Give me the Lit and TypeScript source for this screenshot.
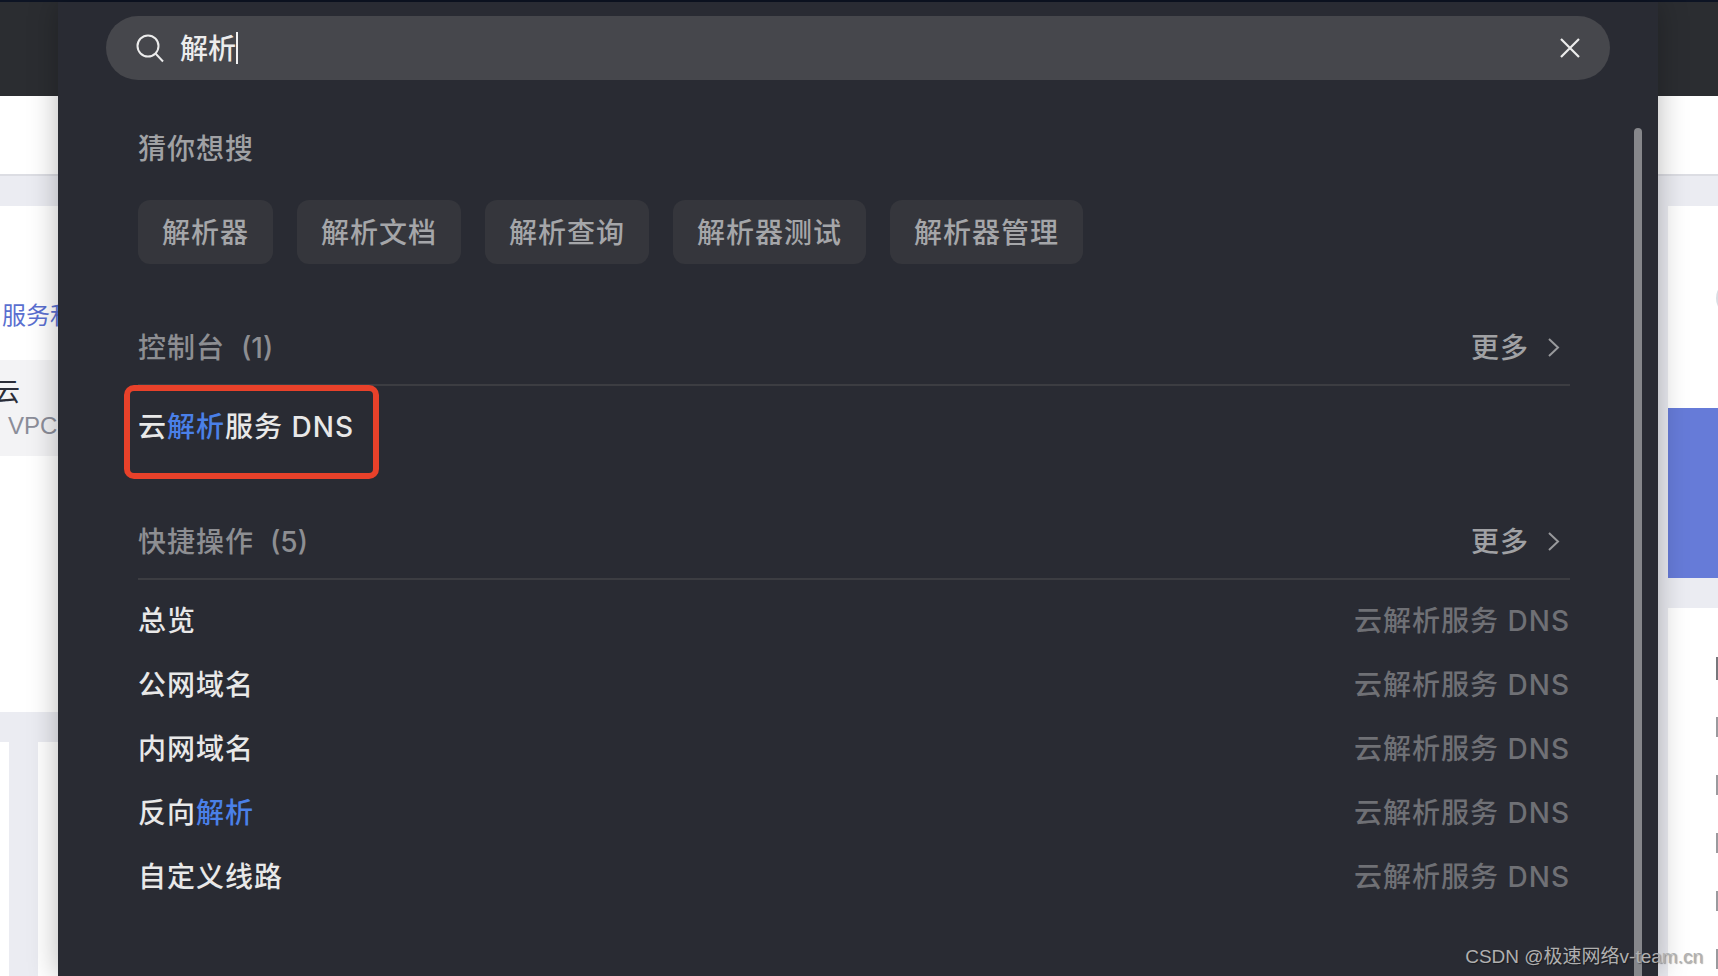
import { LitElement, html, css, svg } from "lit";
import { customElement } from "lit/decorators.js";

const SUGGESTIONS = ["解析器", "解析文档", "解析查询", "解析器测试", "解析器管理"];

const QUICK_ACTIONS: { label: string; hit?: string }[] = [
  { label: "总览" },
  { label: "公网域名" },
  { label: "内网域名" },
  { label: "反向", hit: "解析" },
  { label: "自定义线路" },
];

const chevron = svg`<path d="M2 2l9 8.5L2 19" fill="none" stroke="currentColor" stroke-width="2"/>`;

@customElement("app-root")
export class AppRoot extends LitElement {
  static styles = css`
    :host {
      display: block;
      width: 1718px;
      height: 976px;
      overflow: hidden;
      position: relative;
      background: #fff;
      font-family: "Liberation Sans", "Noto Sans CJK SC", sans-serif;
    }

    .topline {
      height: 2px;
      background: #0d1424;
    }

    .stage {
      display: grid;
      grid-template-columns: 58px 1600px 60px;
      height: 974px;
    }

    /* page behind the dialog */
    .side {
      display: flex;
      flex-direction: column;
      min-width: 0;
      overflow: hidden;
    }
    .bar {
      height: 94px;
      flex: none;
      background: #2b2d31;
    }
    .white {
      height: 78px;
      flex: none;
      background: #fff;
    }
    .rule {
      height: 2px;
      flex: none;
      background: #dcdde3;
    }
    .gutter {
      height: 30px;
      flex: none;
      background: #ebecf2;
    }

    .left-card {
      height: 506px;
      flex: none;
      background: #fff;
      padding-top: 95px;
      box-sizing: border-box;
    }
    .service-link {
      height: 30px;
      line-height: 30px;
      font-size: 24px;
      color: #5a6fd0;
      white-space: nowrap;
      margin-left: 2px;
    }
    .service-row {
      height: 96px;
      margin-top: 29px;
      background: #f3f3f5;
      box-sizing: border-box;
      padding-top: 16px;
      white-space: nowrap;
    }
    .service-name {
      height: 32px;
      line-height: 32px;
      font-size: 26px;
      color: #2b2d38;
      margin-left: -6px;
    }
    .service-sub {
      height: 36px;
      line-height: 36px;
      font-size: 24px;
      color: #8b8d99;
      margin-left: 8px;
    }
    .left-cols {
      flex: 1;
      display: grid;
      grid-template-columns: 9px 29px 20px;
      background: #ebecf2;
    }
    .left-cols i {
      background: #fff;
    }
    .left-cols i:nth-child(2) {
      background: #ebecf2;
    }

    .right-body {
      flex: 1;
      display: flex;
      flex-direction: column;
      background: #ebecf2;
      padding-left: 10px;
    }
    .right-top {
      height: 202px;
      flex: none;
      background: #fff;
      display: flex;
      justify-content: flex-end;
      align-items: flex-start;
      overflow: hidden;
    }
    .arc {
      width: 36px;
      height: 36px;
      flex: none;
      margin: 74px -34px 0 0;
      border-radius: 50%;
      background: #d9dde3;
    }
    .blue {
      height: 170px;
      flex: none;
      background: #667bd8;
    }
    .right-gap {
      height: 30px;
      flex: none;
    }
    .right-bottom {
      flex: 1;
      background: #fff;
      display: flex;
      flex-direction: column;
      align-items: flex-end;
      padding-top: 49px;
    }
    .right-bottom i {
      width: 2px;
      height: 20px;
      margin-bottom: 38px;
      background: #9a9a9e;
    }
    .right-bottom i:first-child {
      height: 23px;
      margin-bottom: 37px;
      background: #77777c;
    }

    /* dialog */
    .panel {
      position: relative;
      z-index: 1;
      background: #292b33;
      box-shadow: 0 0 28px rgba(0, 0, 0, 0.28);
      padding-top: 14px;
      overflow: hidden;
      font-family: Inter, "Noto Sans CJK SC", sans-serif;
      font-weight: 500;
    }
    .search {
      display: flex;
      align-items: center;
      height: 64px;
      margin: 0 48px;
      padding: 0 30px;
      border-radius: 32px;
      background: #46474c;
      color: #ececec;
    }
    .search svg {
      flex: none;
    }
    .search-icon {
      margin-top: 2px;
    }
    .query {
      flex: 1;
      display: flex;
      align-items: center;
      margin-left: 16px;
      font-size: 28px;
      line-height: 40px;
    }
    .query-text {
      padding-top: 2px;
    }
    .caret {
      width: 2px;
      height: 32px;
      background: #f2f2f2;
    }

    .body {
      padding: 0 88px 0 80px;
    }
    .guess-title {
      margin-top: 48px;
      height: 40px;
      line-height: 42px;
      font-size: 28px;
      letter-spacing: 1px;
      color: #a0a1a4;
    }
    .chips {
      display: flex;
      gap: 24px;
      margin-top: 32px;
    }
    .chip {
      height: 64px;
      line-height: 66px;
      padding: 0 24px;
      border-radius: 12px;
      background: #35363c;
      font-size: 28px;
      letter-spacing: 1px;
      color: #a5a6a9;
    }

    .section-head {
      display: flex;
      align-items: center;
      justify-content: space-between;
      height: 56px;
      margin-top: 54px;
      padding: 0 10px 10px 0;
      border-bottom: 2px solid #3c3d42;
      font-size: 28px;
      letter-spacing: 1px;
      color: #8d8e92;
    }
    .section-head + .rows {
      margin-top: 8px;
    }
    .count {
      margin-left: 16px;
      letter-spacing: 0;
    }
    .more {
      display: flex;
      align-items: center;
      gap: 18px;
      color: #a0a1a4;
    }
    .more svg {
      color: #98999c;
      margin-top: 2px;
    }

    .row {
      display: flex;
      justify-content: space-between;
      height: 64px;
      line-height: 66px;
      font-size: 28px;
      letter-spacing: 1px;
      color: #e8e8e8;
    }
    .hit {
      color: #4a80e8;
    }
    .product {
      color: #6f7075;
    }

    /* things lying over the dialog */
    .scrollbar {
      position: absolute;
      top: 126px;
      bottom: 0;
      right: 16px;
      width: 8px;
      border-radius: 4px 4px 0 0;
      background: #86878b;
    }
    .callout {
      position: absolute;
      left: 124px;
      top: 385px;
      width: 255px;
      height: 94px;
      box-sizing: border-box;
      border: 6px solid #e8412a;
      border-radius: 10px;
      z-index: 2;
    }
    .watermark {
      position: absolute;
      right: 15px;
      top: 943px;
      z-index: 3;
      font-size: 19px;
      line-height: 28px;
      white-space: nowrap;
      color: #b0b0b0;
      text-shadow: 1px 1px 1px rgba(0, 0, 0, 0.35);
    }
  `;

  private renderMore() {
    return html`<span class="more">
      更多
      <svg width="13" height="21" viewBox="0 0 13 21">${chevron}</svg>
    </span>`;
  }

  protected render() {
    return html`
      <div class="topline"></div>
      <div class="stage">
        <div class="side">
          <div class="bar"></div>
          <div class="white"></div>
          <div class="rule"></div>
          <div class="gutter"></div>
          <div class="left-card">
            <div class="service-link">服务和</div>
            <div class="service-row">
              <div class="service-name">云</div>
              <div class="service-sub">VPC</div>
            </div>
          </div>
          <div class="gutter"></div>
          <div class="left-cols"><i></i><i></i><i></i></div>
        </div>

        <div class="panel">
          <div class="search">
            <svg class="search-icon" width="28" height="30" viewBox="0 0 28 30" fill="none" stroke="currentColor" stroke-width="2">
              <circle cx="12" cy="12" r="10.5" />
              <path d="M19.5 19.5L27 27.5" />
            </svg>
            <div class="query"><span class="query-text">解析</span><span class="caret"></span></div>
            <svg width="20" height="20" viewBox="0 0 20 20" fill="none" stroke="currentColor" stroke-width="2.2">
              <path d="M1 1l18 18M19 1L1 19" />
            </svg>
          </div>

          <div class="body">
            <div class="guess-title">猜你想搜</div>
            <div class="chips">
              ${SUGGESTIONS.map((s) => html`<div class="chip">${s}</div>`)}
            </div>

            <div class="section-head">
              <span>控制台<span class="count">(1)</span></span>
              ${this.renderMore()}
            </div>
            <div class="rows">
              <div class="row">
                <span>云<span class="hit">解析</span>服务 DNS</span>
              </div>
            </div>

            <div class="section-head">
              <span>快捷操作<span class="count">(5)</span></span>
              ${this.renderMore()}
            </div>
            <div class="rows">
              ${QUICK_ACTIONS.map(
                (a) => html`<div class="row">
                  <span>${a.label}${a.hit ? html`<span class="hit">${a.hit}</span>` : ""}</span>
                  <span class="product">云解析服务 DNS</span>
                </div>`,
              )}
            </div>
          </div>

          <div class="scrollbar"></div>
        </div>

        <div class="side">
          <div class="bar"></div>
          <div class="white"></div>
          <div class="rule"></div>
          <div class="gutter"></div>
          <div class="right-body">
            <div class="right-top"><span class="arc"></span></div>
            <div class="blue"></div>
            <div class="right-gap"></div>
            <div class="right-bottom"><i></i><i></i><i></i><i></i><i></i><i></i></div>
          </div>
        </div>
      </div>

      <div class="callout"></div>
      <div class="watermark">CSDN @极速网络v-team.cn</div>
    `;
  }
}

declare global {
  interface HTMLElementTagNameMap {
    "app-root": AppRoot;
  }
}
